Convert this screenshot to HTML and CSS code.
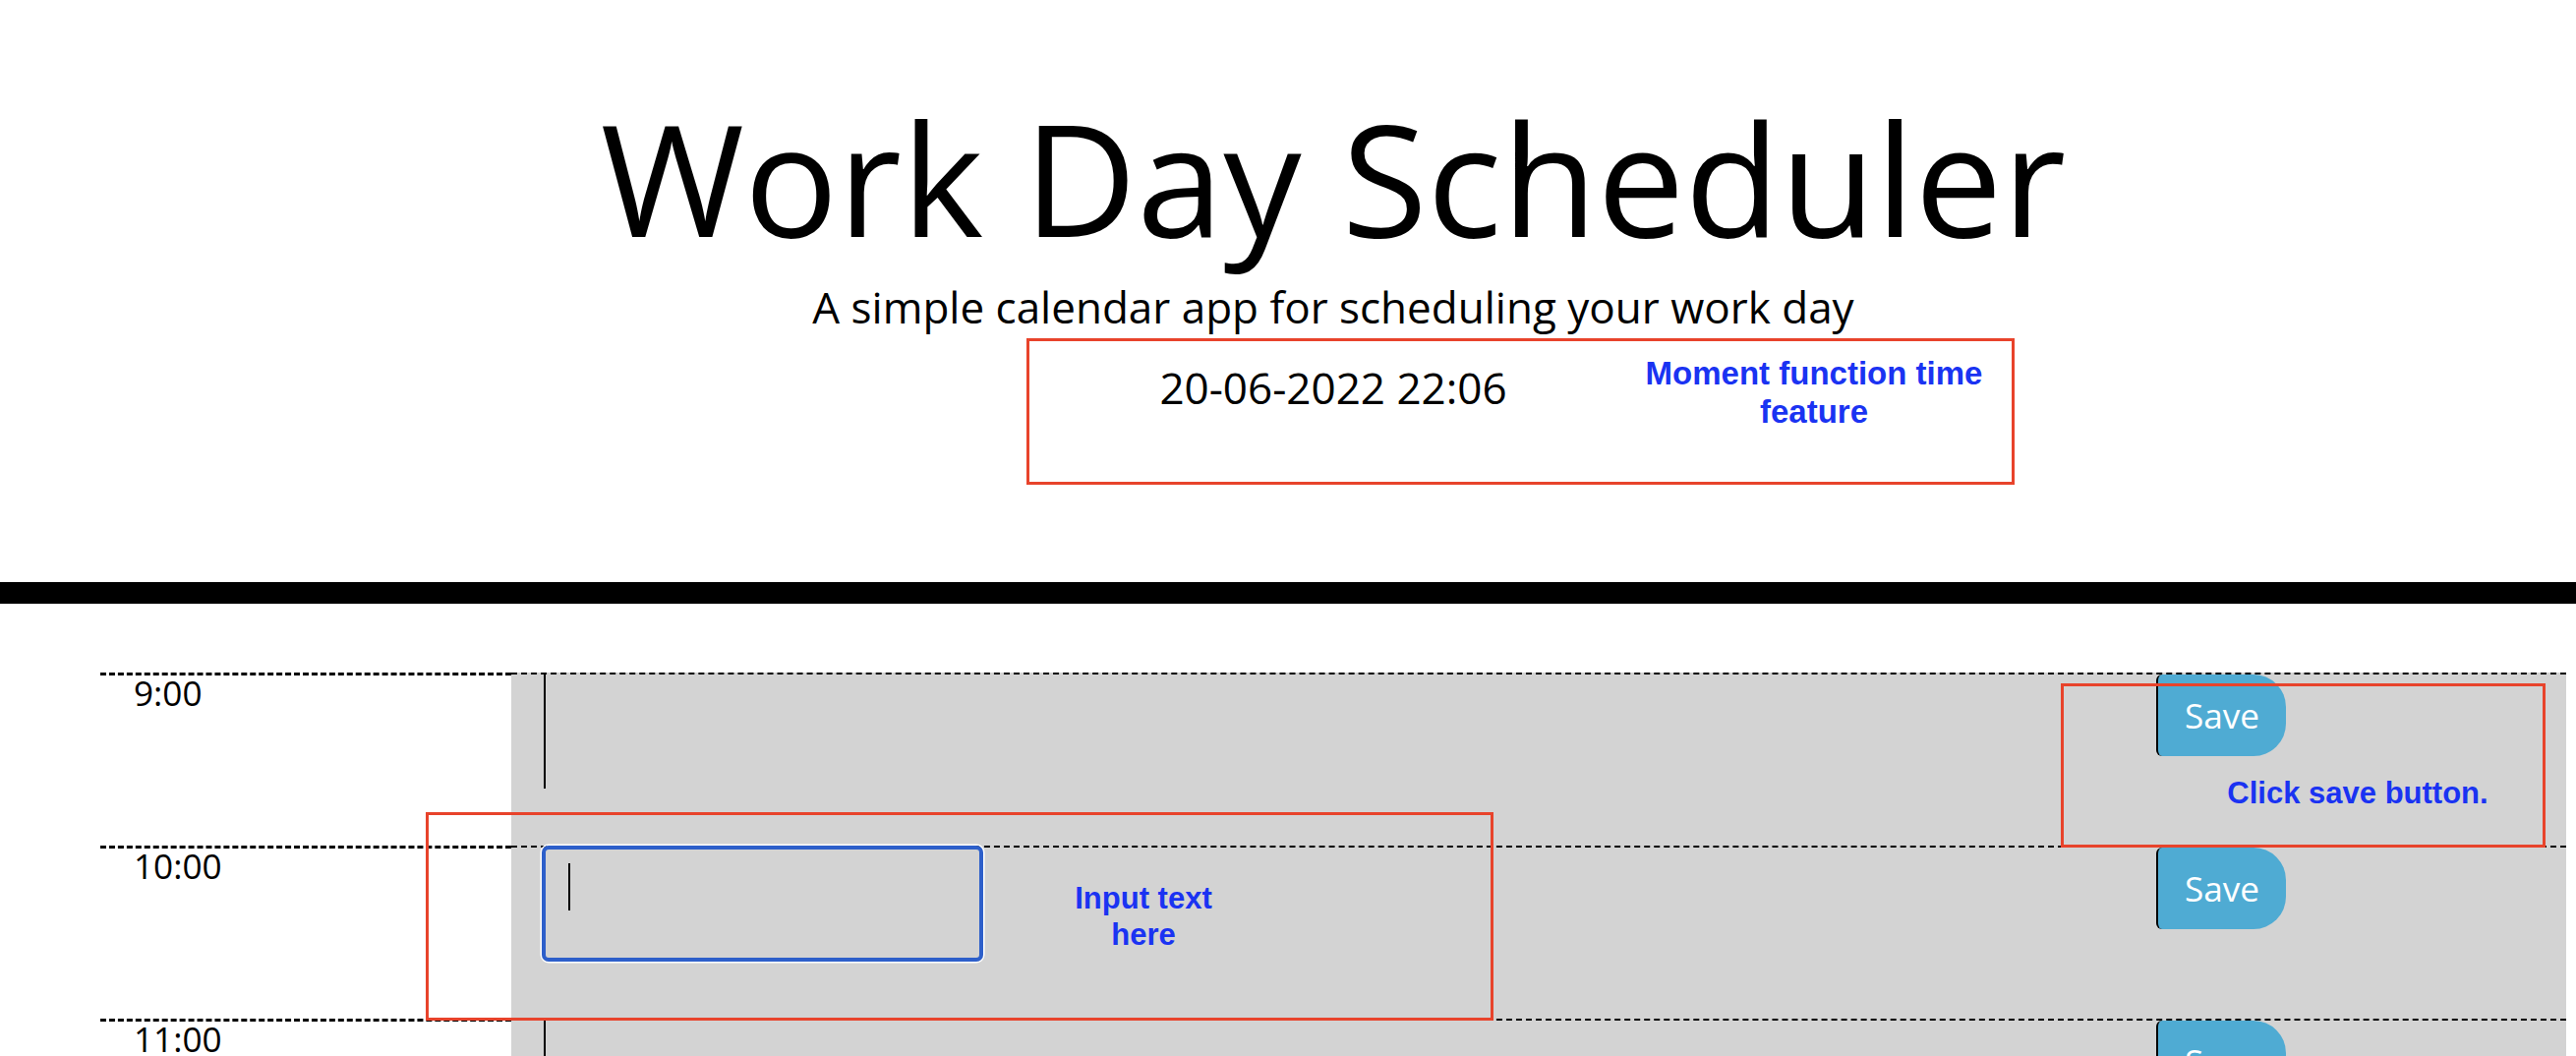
FILE: index.html
```html
<!DOCTYPE html>
<html lang="en">
<head>
<meta charset="utf-8">
<title>Work Day Scheduler</title>
<link rel="stylesheet" href="styles.css">
</head>
<body>
  <header class="jumbotron">
    <h1 class="title">Work Day Scheduler</h1>
    <p class="lead">A simple calendar app for scheduling your work day</p>
    <p class="lead current-day">20-06-2022 22:06</p>
  </header>

  <div class="container">
    <div class="row">
      <div class="hour">9:00</div>
      <div class="slot">
        <div class="desc-col"><textarea class="description"></textarea></div>
        <div class="btn-col"><button class="saveBtn">Save</button></div>
      </div>
    </div>
    <div class="row">
      <div class="hour">10:00</div>
      <div class="slot">
        <div class="desc-col">
          <div class="focus-wrap"><textarea class="description focused"></textarea><span class="caret"></span></div>
        </div>
        <div class="btn-col"><button class="saveBtn">Save</button></div>
      </div>
    </div>
    <div class="row">
      <div class="hour">11:00</div>
      <div class="slot">
        <div class="desc-col"><textarea class="description"></textarea></div>
        <div class="btn-col"><button class="saveBtn">Save</button></div>
      </div>
    </div>
  </div>

  <div class="note note-moment"><div class="note-text">Moment function time<br>feature</div></div>
  <div class="note note-input"><div class="note-text">Input text<br>here</div></div>
  <div class="note note-save"><div class="note-text">Click save button.</div></div>
</body>
</html>
```
FILE: styles.css
```css
* { box-sizing: border-box; }

html { overflow: hidden; }

body {
  margin: 0;
  position: relative;
  font-family: "Open Sans", "Noto Sans", sans-serif;
  font-size: 35.2px;
  line-height: 1;
  color: #000;
  background: #fff;
}

.jumbotron {
  padding: 101px 0 176px 92px;
  text-align: center;
  border-bottom: 22px solid #000;
  margin-bottom: 70px;
}

.title {
  margin: 0;
  font-size: 158.4px;
  font-weight: 400;
  line-height: 1;
}

.lead {
  margin: 31px 0 0;
  font-size: 44px;
  line-height: 1;
}

.current-day { margin-top: 37.5px; }

.container {
  margin-left: 102px;
  width: 2508px;
}

.row {
  display: flex;
  height: 176px;
}

.hour {
  width: 418px;
  padding-left: 34px;
  background: #fff;
  border-top: 3px dashed #000;
}

.slot {
  flex: 1;
  display: flex;
  background: #d3d3d3;
  border-top: 2px dashed #000;
}

.desc-col {
  width: 1673px;
  padding-left: 33px;
}

.description {
  display: block;
  width: 451px;
  height: 116px;
  padding: 10px;
  border: 0;
  border-left: 2px solid #000;
  background: transparent;
  resize: none;
  font: inherit;
  outline: none;
}

.focus-wrap {
  position: relative;
  width: 449px;
  margin: -2px 0 0 -2px;
}

.description.focused {
  width: 100%;
  height: 118px;
  border: 4px solid #2d5fca;
  border-radius: 7px;
  box-shadow: 0 0 0 1.5px #fff;
}

.caret {
  position: absolute;
  left: 27px;
  top: 18px;
  width: 2px;
  height: 48px;
  background: #000;
}

.btn-col { flex: none; }

.saveBtn {
  display: flex;
  align-items: center;
  justify-content: center;
  width: 132px;
  height: 83px;
  padding: 0;
  border: 0;
  border-left: 2px solid #000;
  border-radius: 6px 33px 33px 6px;
  background: #4fabd3;
  color: #fff;
  font-family: "Open Sans", "Noto Sans", sans-serif;
  font-size: 35.2px;
  line-height: 1;
}

.note {
  position: absolute;
  border: 3px solid #e8432b;
}

.note-text {
  position: absolute;
  width: 400px;
  text-align: center;
  font-family: "Liberation Sans", Arial, sans-serif;
  font-weight: 700;
  font-size: 31px;
  line-height: 37px;
  color: #1a33f2;
}

.note-moment { left: 1044px; top: 344px; width: 1005px; height: 149px; }
.note-moment .note-text { left: 598px; top: 13px; font-size: 33px; line-height: 39px; }

.note-input { left: 433px; top: 826px; width: 1086px; height: 212px; }
.note-input .note-text { left: 527px; top: 66px; }

.note-save { left: 2096px; top: 695px; width: 493px; height: 167px; }
.note-save .note-text { left: 99px; top: 90px; }
```
